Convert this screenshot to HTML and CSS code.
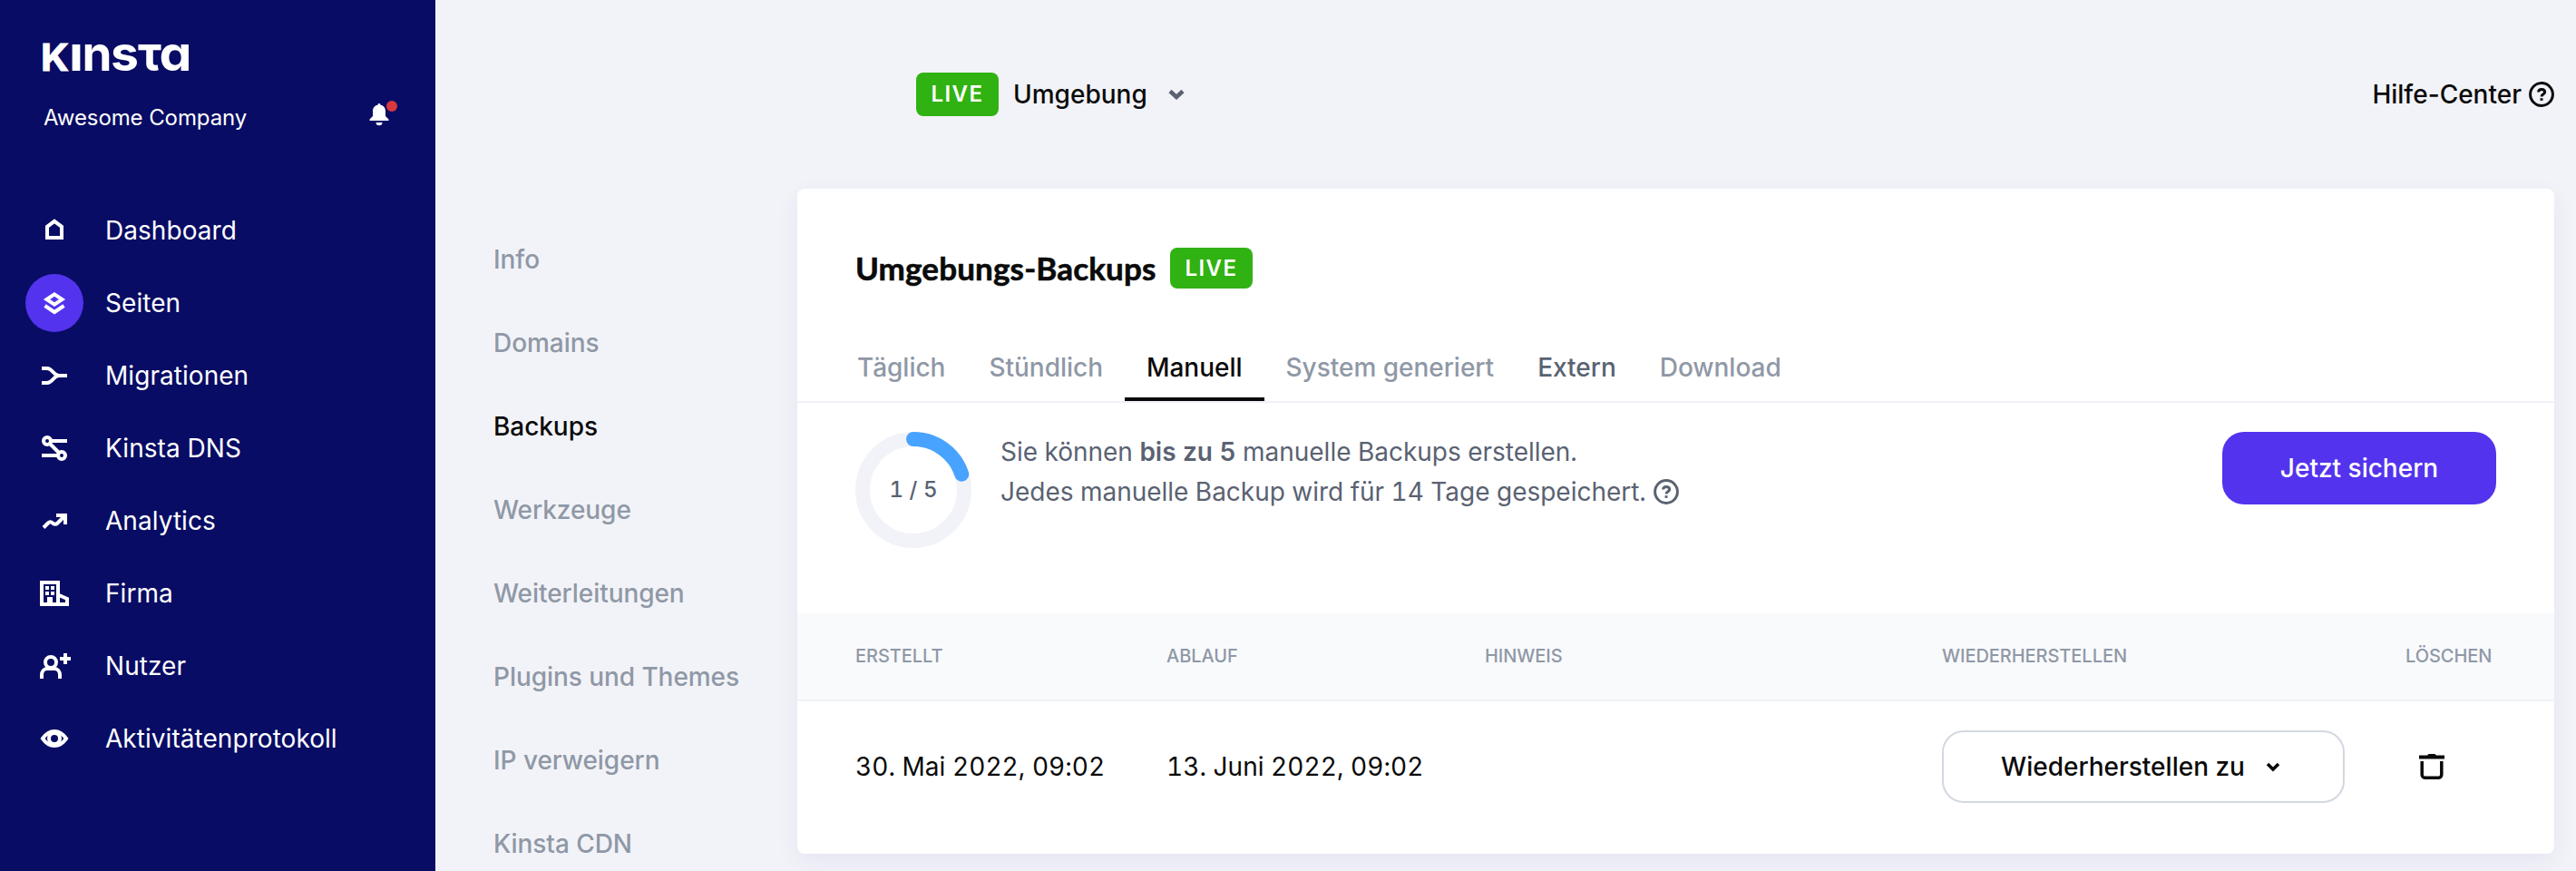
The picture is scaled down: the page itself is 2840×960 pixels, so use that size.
FILE: index.html
```html
<!DOCTYPE html>
<html lang="de">
<head>
    <meta charset="UTF-8">
    <meta name="viewport" content="width=device-width, initial-scale=1.0">
    <title>Umgebungs-Backups</title>
    <link rel="stylesheet" href="styles.css">
</head>
<body>

    <!-- Seitenleiste -->
    <aside class="sidebar">
        <svg class="logo" viewBox="0 0 160 30" aria-label="Kinsta">
            <text x="-3" y="30" class="logo-k" textLength="31" lengthAdjust="spacingAndGlyphs">K</text>
            <text x="28" y="30" textLength="16" lengthAdjust="spacingAndGlyphs">ı</text>
            <text x="42.5" y="30" textLength="33" lengthAdjust="spacingAndGlyphs">n</text>
            <text x="74" y="30" textLength="31" lengthAdjust="spacingAndGlyphs">s</text>
            <text x="104" y="30" textLength="26" lengthAdjust="spacingAndGlyphs">τ</text>
            <text x="127.5" y="30" textLength="36" lengthAdjust="spacingAndGlyphs">ɑ</text>
        </svg>
        <div class="company">
            <span>Awesome Company</span>
            <svg class="bell" width="32" height="28" viewBox="0 0 32 28">
                <path d="M11 3a1.6 1.6 0 0 1 1.6 1.7C16 5.400 18 8 18 11.500V17l3.500 3.500V22H.5v-1.500L4 17v-5.500C4 8 6 5.400 9.400 4.700A1.600 1.600 0 0 1 11 3zM7.500 24h7a3.500 3.200 0 0 1-7 0z" fill="#fff"/>
                <circle cx="25" cy="6" r="6" fill="#d9383c"/>
            </svg>
        </div>
        <nav class="menu">
            <a class="menu-item"><span class="menu-icon"><svg viewBox="0 0 64 64"><path d="M24 40V27.800L32 21.800l8 6V40z" stroke-width="4"/></svg></span>Dashboard</a>
            <a class="menu-item active"><span class="menu-icon"><svg viewBox="0 0 64 64"><path d="M23.500 28 32 22.400 40.500 28 32 33.600zM21.500 35 32 42l10.500-7" stroke-width="4"/></svg></span>Seiten</a>
            <a class="menu-item"><span class="menu-icon"><svg viewBox="0 0 64 64"><path d="M18 24h6c6 0 7 8 13 8-6 0-7 8-13 8h-6M35 32h11" stroke-width="4"/></svg></span>Migrationen</a>
            <a class="menu-item"><span class="menu-icon"><svg viewBox="0 0 64 64"><path d="M28 24h18M18 40h18M26.500 26.500l11 11" stroke-width="4"/><circle cx="24" cy="24" r="4" stroke-width="4"/><circle cx="40" cy="40" r="4" stroke-width="4"/></svg></span>Kinsta DNS</a>
            <a class="menu-item"><span class="menu-icon"><svg viewBox="0 0 64 64"><path d="M20 39.500l5-5c2-2 3.500-1.500 5 0s3.500 2 5.500 0L43 27M34 26h10v10" stroke-width="4"/></svg></span>Analytics</a>
            <a class="menu-item"><span class="menu-icon"><svg viewBox="0 0 64 64"><path d="M18 44V20h18v24M36 33.500l10 4.500v6M16 44h32" stroke-width="4"/><path d="M22 24h4v4h-4zM28 24h4v4h-4zM22 30h4v4h-4zM28 30h4v4h-4zM24 36h6v8h-6z" class="solid"/></svg></span>Firma</a>
            <a class="menu-item"><span class="menu-icon"><svg viewBox="0 0 64 64"><circle cx="28" cy="28" r="6" stroke-width="4"/><path d="M18 46v-4c0-4 2.500-7 6-7h8c3.500 0 6 3 6 7v4M38 24h12M44 18v12" stroke-width="4"/></svg></span>Nutzer</a>
            <a class="menu-item"><span class="menu-icon"><svg viewBox="0 0 64 64"><path d="M19 32c3.500-5 8-8 13-8s9.500 3 13 8c-3.500 5-8 8-13 8s-9.500-3-13-8z" stroke-width="4"/><circle cx="32" cy="32" r="6" stroke-width="4"/></svg></span>Aktivitätenprotokoll</a>
        </nav>
    </aside>

    <main class="main">
        <!-- Kopfzeile -->
        <header class="topbar">
            <div class="env">
                <span class="badge">LIVE</span>
                <span class="env-name">Umgebung</span>
                <svg class="env-arrow" width="18" height="12" viewBox="0 0 18 12"><path d="M2 2.500l7 6.500 7-6.500"/></svg>
            </div>
            <a class="help">Hilfe-Center
                <svg class="help-icon" width="28" height="28" viewBox="0 0 28 28"><circle cx="14" cy="14" r="12.400"/><path d="M10.600 11.600c0-2 1.500-3.200 3.500-3.200s3.500 1.200 3.500 3c0 2.400-3.500 2.400-3.500 5"/><path d="M14 18.200v2.700"/></svg>
            </a>
        </header>

        <div class="content">
            <nav class="subnav">
                <a>Info</a>
                <a>Domains</a>
                <a class="active">Backups</a>
                <a>Werkzeuge</a>
                <a>Weiterleitungen</a>
                <a>Plugins und Themes</a>
                <a>IP verweigern</a>
                <a>Kinsta CDN</a>
            </nav>

            <section class="card">
                <div class="card-head">
                    <h1>Umgebungs-Backups</h1>
                    <span class="badge badge-small">LIVE</span>
                </div>

                <div class="tabs">
                    <a>Täglich</a>
                    <a>Stündlich</a>
                    <a class="active">Manuell</a>
                    <a>System generiert</a>
                    <a class="hover">Extern</a>
                    <a>Download</a>
                </div>

                <!-- Anzahl der manuellen Backups -->
                <div class="usage">
                    <svg class="ring" width="128" height="128" viewBox="0 0 128 128">
                        <circle cx="64" cy="64" r="56" class="ring-track"/>
                        <path d="M64 8A56 56 0 0 1 117.260 46.700" class="ring-value"/>
                        <text x="64" y="72">1 / 5</text>
                    </svg>
                    <p class="usage-text">
                        Sie können <b>bis zu 5</b> manuelle Backups erstellen.<br>
                        <span class="usage-line">Jedes manuelle Backup wird für 14 Tage gespeichert.
                        <svg class="help-icon" width="28" height="28" viewBox="0 0 28 28"><circle cx="14" cy="14" r="12.400"/><path d="M10.600 11.600c0-2 1.500-3.200 3.500-3.200s3.500 1.200 3.500 3c0 2.400-3.500 2.400-3.500 5"/><path d="M14 18.200v2.700"/></svg></span>
                    </p>
                    <button class="btn-primary">Jetzt sichern</button>
                </div>

                <div class="row row-head">
                    <span>ERSTELLT</span>
                    <span>ABLAUF</span>
                    <span>HINWEIS</span>
                    <span>WIEDERHERSTELLEN</span>
                    <span>LÖSCHEN</span>
                </div>
                <div class="row row-data">
                    <span>30. Mai 2022, 09:02</span>
                    <span>13. Juni 2022, 09:02</span>
                    <span></span>
                    <button class="btn-restore">Wiederherstellen zu
                        <svg width="16" height="11" viewBox="0 0 16 11"><path d="M2 2l6 6 6-6"/></svg>
                    </button>
                    <svg class="trash" width="28" height="28" viewBox="0 0 28 28"><path d="M0 1.500h9L10.500 0h7L19 1.500h9v4H0z"/><path d="M3.200 8v14.800a3.500 3.500 0 0 0 3.500 3.500h14.600a3.500 3.500 0 0 0 3.500-3.500V8" class="trash-bin"/></svg>
                </div>
            </section>
        </div>
    </main>

</body>
</html>
```

FILE: styles.css
```css
* { box-sizing: border-box; }
body {
    margin: 0;
    height: 960px;
    display: flex;
    overflow: hidden;
    font-family: Inter, sans-serif;
    font-size: 28px;
    color: #0a0a0a;
    background: #f2f3f8;
}
svg { display: block; flex: none; }
button { font-family: inherit; font-size: inherit; }

/* Seitenleiste */
.sidebar {
    width: 480px;
    flex: none;
    padding-top: 48px;
    color: #fff;
    background: #080c64;
}
.logo {
    width: 160px;
    height: 30px;
    margin-left: 48px;
    overflow: visible;
    fill: #fff;
    font-size: 54px;
    font-weight: 700;
}
.logo .logo-k { font-size: 41px; stroke: #fff; stroke-width: 1; }
.company {
    display: flex;
    justify-content: space-between;
    align-items: center;
    height: 40px;
    margin: 31px 41px 85px 48px;
    font-size: 24px;
    letter-spacing: -0.1px;
}
.bell { margin-top: -9px; }
.menu-item {
    display: flex;
    align-items: center;
    gap: 24px;
    height: 64px;
    margin: 0 0 16px 28px;
    letter-spacing: 0.05px;
}
.menu { margin-top: -12px; }
.menu-icon { width: 64px; height: 64px; border-radius: 50%; }
.menu-icon svg { fill: none; stroke: #fff; }
.menu-icon .solid { fill: #fff; stroke: none; }
.menu-item.active .menu-icon { background: #5333ed; }

/* Kopfzeile */
.main { flex: 1; }
.topbar {
    display: flex;
    justify-content: space-between;
    align-items: center;
    height: 208px;
    padding: 0 24px 0 530px;
    font-weight: 500;
}
.env, .help { display: flex; align-items: center; }
.env-name { margin: 0 23px 0 16px; }
.env-arrow { fill: none; stroke: #5a6272; stroke-width: 4.5; }
.help { gap: 8px; }
.help-icon { fill: none; stroke: currentColor; stroke-width: 3; }
.badge {
    width: 91px;
    height: 48px;
    border-radius: 8px;
    color: #fff;
    background: #31b213;
    font-size: 24px;
    font-weight: 600;
    letter-spacing: 1.5px;
    line-height: 48px;
    text-align: center;
}
.badge-small { height: 45px; line-height: 45px; }

/* Navigation der Seite */
.content { display: flex; }
.subnav {
    display: flex;
    flex-direction: column;
    width: 399px;
    padding: 32px 0 0 64px;
    font-weight: 500;
    letter-spacing: -0.06px;
    color: #8f98a6;
}
.subnav a { height: 92px; line-height: 92px; white-space: nowrap; }
.subnav .active { color: #0a0a0a; }

.card {
    width: 1937px;
    height: 733px;
    border-radius: 8px;
    background: #fff;
    box-shadow: 0 8px 24px rgba(60, 60, 170, 0.08);
}
.card-head {
    display: flex;
    align-items: center;
    gap: 16px;
    padding: 65px 64px 0;
}
h1 {
    width: 331px;
    margin: 0;
    font-family: Lato, sans-serif;
    font-size: 35px;
    font-weight: 700;
    letter-spacing: 0.15px;
    line-height: 45px;
    white-space: nowrap;
    -webkit-text-stroke: 0.6px #0a0a0a;
}
.tabs {
    display: flex;
    height: 78px;
    margin-top: 48px;
    padding-left: 42px;
    border-bottom: 2px solid #f1f2f8;
    font-weight: 500;
    letter-spacing: -0.02px;
    line-height: 79px;
    color: #8f98a6;
}
.tabs a { padding: 0 24px; }
.tabs .active { color: #0a0a0a; border-bottom: 4px solid #0a0a0a; }
.tabs .hover { color: #5a6272; }

/* Verbrauch */
.usage {
    display: flex;
    align-items: flex-start;
    height: 232px;
    padding: 32px 64px 0;
    font-variant-numeric: tabular-nums;
    color: #5a6272;
}
.ring-track { fill: none; stroke: #f2f3f8; stroke-width: 16; }
.ring-value { fill: none; stroke: #48a2ff; stroke-width: 16; stroke-linecap: round; }
.ring text { fill: #5a6272; font-size: 24px; font-weight: 500; text-anchor: middle; }
.usage-text { flex: 1; margin: 0 0 0 32px; line-height: 44px; letter-spacing: -0.02px; }
.usage-text b { font-weight: 600; }
.usage-line { display: flex; align-items: center; gap: 8px; }
.btn-primary {
    width: 302px;
    height: 80px;
    border: none;
    border-radius: 24px;
    color: #fff;
    background: #5333ed;
    font-weight: 500;
}

/* Tabelle */
.row {
    display: grid;
    grid-template-columns: 343px 351px 504px 511px 1fr;
    align-items: center;
    padding-left: 64px;
}
.row-head {
    height: 97px;
    padding-bottom: 1px;
    border-bottom: 2px solid #f1f2f8;
    background: #f9fafc;
    font-size: 20px;
    font-weight: 500;
    letter-spacing: -0.05px;
    color: #8f98a6;
}
.row-data { height: 144px; font-variant-numeric: tabular-nums; letter-spacing: 0.04px; }
.btn-restore {
    display: flex;
    justify-content: center;
    align-items: center;
    gap: 23px;
    width: 444px;
    height: 80px;
    padding: 0 12px 0 6px;
    border: 2px solid #d3d7df;
    border-radius: 24px;
    background: #fff;
    color: #0a0a0a;
    font-weight: 500;
}
.btn-restore path { fill: none; stroke: #0a0a0a; stroke-width: 3.500; }
.trash { margin-left: 15px; }
.trash path { fill: #0a0a0a; }
.trash .trash-bin { fill: none; stroke: #0a0a0a; stroke-width: 3.500; }
```
